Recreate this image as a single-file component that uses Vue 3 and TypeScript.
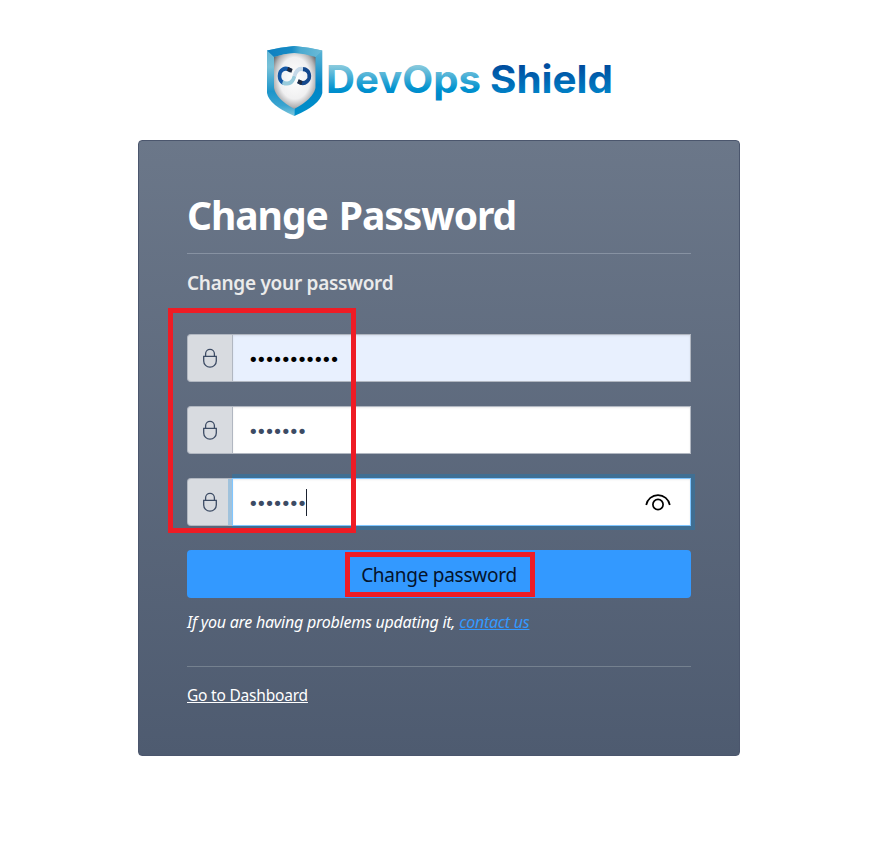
<script setup lang="ts">
interface Field {
  id: string
  length: number
  state: 'autofilled' | 'filled' | 'focused'
}

const fields: Field[] = [
  { id: 'current', length: 11, state: 'autofilled' },
  { id: 'next', length: 7, state: 'filled' },
  { id: 'confirm', length: 7, state: 'focused' },
]

const mask = (length: number): string => '•'.repeat(length)
</script>

<template>
  <main class="page">
    <svg class="logo" width="348" height="72" viewBox="0 0 348 72" role="img" aria-label="DevOps Shield">
      <defs>
        <linearGradient id="light" x1="0" y1="20" x2="0" y2="50" gradientUnits="userSpaceOnUse">
          <stop offset="0" stop-color="#8ccbdd" />
          <stop offset="0.8" stop-color="#0092cf" />
          <stop offset="1" stop-color="#0088ca" />
        </linearGradient>
        <linearGradient id="dark" x1="0" y1="18" x2="0" y2="50" gradientUnits="userSpaceOnUse">
          <stop offset="0" stop-color="#00489b" />
          <stop offset="1" stop-color="#0083c8" />
        </linearGradient>
        <linearGradient id="left" x1="0" y1="0" x2="0" y2="1">
          <stop offset="0" stop-color="#5db3d3" />
          <stop offset="0.3" stop-color="#78c1d8" />
          <stop offset="0.65" stop-color="#1c95ca" />
          <stop offset="0.85" stop-color="#3ba4d0" />
          <stop offset="1" stop-color="#82c8dc" />
        </linearGradient>
        <linearGradient id="right" x1="0" y1="0" x2="0" y2="1">
          <stop offset="0" stop-color="#65b9d6" />
          <stop offset="0.25" stop-color="#3ca4d0" />
          <stop offset="0.55" stop-color="#0085c7" />
          <stop offset="1" stop-color="#0090ca" />
        </linearGradient>
        <linearGradient id="top">
          <stop offset="0" stop-color="#0d7fc0" />
          <stop offset="0.45" stop-color="#168bc5" />
          <stop offset="0.6" stop-color="#4aaad0" />
          <stop offset="1" stop-color="#6dbbd7" />
        </linearGradient>
        <radialGradient id="steel" cx="0.5" cy="0.45" r="0.62">
          <stop offset="0" stop-color="#ffffff" />
          <stop offset="0.6" stop-color="#f0f0f1" />
          <stop offset="0.82" stop-color="#b5b5b7" />
          <stop offset="1" stop-color="#67686b" />
        </radialGradient>
      </defs>
      <path d="M29.300 1Q15 2 2 5.500V48Q4 60 29.300 71Z" fill="url(#left)" />
      <path d="M29.300 1Q44 2 57.300 5.500V48Q55 60 29.300 71Z" fill="url(#right)" />
      <path d="M2 5.500Q15 2 29.300 1Q44 2 57.300 5.500L50.500 12Q40 8.500 29.300 8Q19 8.500 9 12Z" fill="url(#top)" />
      <path d="M29.300 8Q40 8.500 50.500 12V43Q48 54 29.300 64Q11 54 9 43V12Q19 8.500 29.300 8Z" fill="url(#steel)" />
      <g fill="none" stroke-width="3.600" transform="translate(0 -4.600) scale(1 1.150)">
        <path d="M26 26.300C20 22.500 14.500 25.500 14.500 31C14.500 34 16 36 18.500 37.200" stroke="#1558a5" />
        <path d="M22.500 24.800L27 26.500" stroke="#202b40" />
        <path d="M17.500 36.600C24 39 28 36.500 29.500 31" stroke="#98cbdc" />
        <path d="M29.500 31C31 26 34 24 38.500 25" stroke="#c6d9e9" />
        <path d="M38 25C45 25.500 46 32.500 42 35.600C39.500 37.500 36 37.500 33 35.500" stroke="#14488d" />
        <path d="M33 35.500L37 37" stroke="#202b40" />
      </g>
      <text class="brand" x="61" y="47.500" textLength="155" lengthAdjust="spacingAndGlyphs" fill="url(#light)">DevOps</text>
      <text class="brand" x="225" y="47.500" textLength="123" lengthAdjust="spacingAndGlyphs" fill="url(#dark)">Shield</text>
    </svg>

    <section class="card">
      <h1 class="title">Change Password</h1>
      <h2 class="subtitle">Change your password</h2>

      <form class="form" @submit.prevent>
        <div class="fields">
          <div v-for="field in fields" :key="field.id" class="field" :class="field.state">
            <span class="addon">
              <svg width="16" height="20" viewBox="0 0 16 20" fill="none" stroke="#3c4b64" stroke-width="1.300">
                <path d="M1.700 8.300H14.300V12.900A6.300 6.300 0 0 1 1.700 12.900ZM3.600 8.300V5.700A4.400 4.400 0 0 1 12.400 5.700V8.300" />
              </svg>
            </span>
            <span class="control">
              <span class="dots">{{ mask(field.length) }}</span>
              <template v-if="field.state === 'focused'">
                <span class="caret"></span>
                <svg class="eye" width="26" height="18" viewBox="0 0 26 18" fill="none" stroke="#000" stroke-width="1.700">
                  <path d="M1.200 12A12 12 0 0 1 24.800 12" />
                  <circle cx="13" cy="11.500" r="5.100" />
                </svg>
              </template>
            </span>
          </div>
          <span class="mark mark-fields"></span>
        </div>

        <button class="submit" type="submit">
          <span class="submit-label">Change password</span>
          <span class="mark mark-submit"></span>
        </button>
      </form>

      <p class="help"><span class="help-text">If you are having problems updating it, </span><a class="contact" href="#">contact us</a></p>
      <div class="footer"><a class="dashboard" href="#">Go to Dashboard</a></div>
    </section>
  </main>
</template>

<style>
body {
  margin: 0;
  background: #fff;
}
</style>

<style scoped>
.page {
  display: flex;
  flex-direction: column;
  align-items: center;
  box-sizing: border-box;
  width: 878px;
  min-height: 867px;
  padding-top: 45px;
  font-family: "Noto Sans", "Open Sans", sans-serif;
  color: #fff;
}

.logo {
  display: block;
  margin-bottom: 23px;
}

.brand {
  font-family: Inter, sans-serif;
  font-size: 38px;
  font-weight: 700;
}

.card {
  box-sizing: border-box;
  width: 602px;
  height: 616px;
  padding: 48px;
  border: 1px solid #4b566d;
  border-radius: 4px;
  background: linear-gradient(#6b7789, #4e5b70);
}

.title {
  box-sizing: border-box;
  height: 65px;
  margin: 0;
  border-bottom: 1px solid #8792a2;
  font-size: 39px;
  line-height: 52px;
  font-weight: 700;
  letter-spacing: -1.050px;
  word-spacing: 2px;
  white-space: nowrap;
}

.subtitle {
  margin: 15px 0 0;
  font-size: 19px;
  line-height: 28px;
  font-weight: 600;
  letter-spacing: -0.280px;
  color: #ebebeb;
  white-space: nowrap;
}

.form {
  display: flex;
  flex-direction: column;
  gap: 24px;
  margin-top: 37px;
}

.fields {
  position: relative;
  display: flex;
  flex-direction: column;
  gap: 24px;
}

.field {
  display: flex;
  height: 48px;
}

.addon {
  display: flex;
  align-items: center;
  justify-content: center;
  box-sizing: border-box;
  width: 45px;
  border: 1px solid #b1b7c1;
  border-right: 0;
  border-radius: 4px 0 0 4px;
  background: #d8dbe0;
}

.control {
  display: flex;
  align-items: center;
  flex: 1;
  box-sizing: border-box;
  padding: 0 19px 0 16px;
  border: 1px solid #b1b7c1;
  background: #fff;
  color: #3c4b64;
  box-shadow: inset 0 1px 2px rgba(0, 0, 21, 0.08);
}

.autofilled .control {
  background: #e8f0fe;
  color: #000;
}

.focused .control {
  border-color: #80c6ff;
  box-shadow: 0 0 0 4px rgba(50, 115, 160, 0.65), inset 0 1px 2px rgba(0, 0, 21, 0.08);
  clip-path: inset(-4px -4px -4px 0);
}

.focused .addon {
  background: linear-gradient(to right, #d8dbe0 40px, #a0c2dc 40px);
}

.dots {
  padding-top: 3px;
  margin-right: 1px;
  font-family: "DejaVu Sans", sans-serif;
  font-size: 18px;
  line-height: 24px;
  letter-spacing: -2.500px;
  text-indent: -1px;
}

.caret {
  width: 1px;
  height: 27px;
  background: #1b2230;
}

.eye {
  margin-left: auto;
}

.mark {
  position: absolute;
  box-sizing: border-box;
  border: 5px solid #ee1c25;
  pointer-events: none;
}

.mark-fields {
  top: -26px;
  left: -19px;
  width: 188px;
  height: 225px;
}

.submit {
  position: relative;
  width: 100%;
  height: 48px;
  padding: 2px 0 0;
  border: 0;
  border-radius: 4px;
  background: #3399ff;
  color: #04132c;
  font-family: inherit;
  font-size: 19px;
  line-height: 28px;
  letter-spacing: -0.260px;
}

.mark-submit {
  top: 2px;
  left: 158px;
  width: 190px;
  height: 45px;
}

.help {
  margin: 12px 0 0;
  font-size: 16px;
  line-height: 24px;
  font-style: italic;
  white-space: pre;
}

.help-text {
  letter-spacing: -0.240px;
}

.contact {
  color: #3399ff;
  letter-spacing: -0.250px;
}

.footer {
  margin-top: 32px;
  padding-top: 16px;
  border-top: 1px solid #75818f;
  font-size: 15.500px;
  line-height: 24px;
  letter-spacing: -0.200px;
}

.dashboard {
  color: #fff;
}
</style>
